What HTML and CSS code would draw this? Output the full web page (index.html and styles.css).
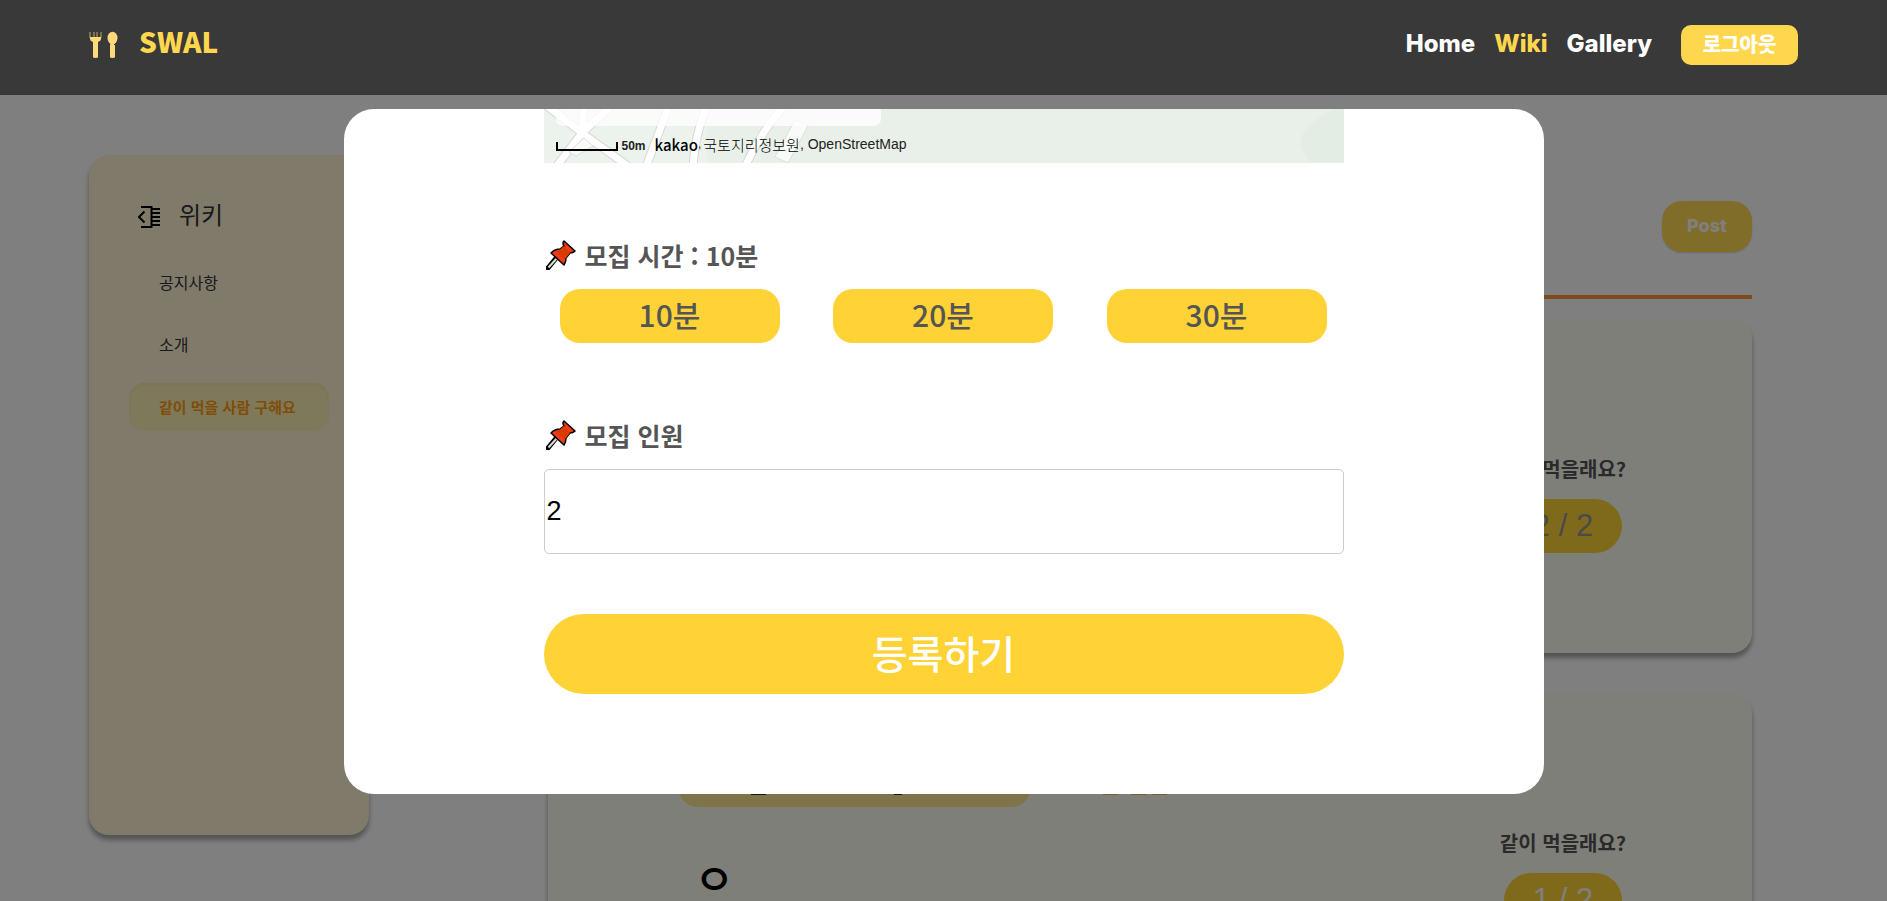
FILE: index.html
```html
<!DOCTYPE html>
<html lang="ko">
<head>
<meta charset="utf-8">
<title>SWAL</title>
<link rel="stylesheet" href="styles.css">
</head>
<body>
<header class="header">
  <a class="brand" href="#">
    <svg class="brand-icon" viewBox="0 0 30 28" aria-hidden="true">
      <path d="M1 1v6M5 1v6M8 1v6M12 1v6" stroke="#ffd97a" stroke-width="1" opacity=".7"/>
      <path d="M1 6h11v2q0 2-3 3v15q0 1-2.500 1t-2.500-1v-15q-3-1-3-3z" fill="#ffd97a"/>
      <ellipse cx="23.500" cy="7" rx="5" ry="6.300" fill="#ffd97a"/>
      <path d="M22 12h3v2h1v12q0 1-2.500 1t-2.500-1v-12z" fill="#ffd97a"/>
    </svg>
    <span>SWAL</span>
  </a>
  <nav class="nav">
    <a href="#">Home</a>
    <a class="current" href="#">Wiki</a>
    <a href="#">Gallery</a>
    <button class="logout" type="button">로그아웃</button>
  </nav>
</header>

<div class="page">
  <aside class="sidebar">
    <h2 class="sidebar-title">
      <svg class="sidebar-icon" viewBox="0 0 22 22" fill="none" stroke="#000" stroke-width="2" aria-hidden="true">
        <path d="M3 1h10.500v20H3M6.500 5.500l-5.500 5.500 5.500 5.500"/>
        <path d="M14 3h8M14 7h8M14 11h8M14 15h8M14 19h8"/>
      </svg>
      <span>위키</span>
    </h2>
    <a class="side-link" href="#">공지사항</a>
    <a class="side-link" href="#">소개</a>
    <a class="side-link active" href="#">같이 먹을 사람 구해요</a>
  </aside>

  <main class="main">
    <div class="toolbar"><button class="post" type="button">Post</button></div>
    <hr class="rule">
    <article class="card">
      <div class="card-body"><div class="tag"></div></div>
      <div class="join">
        <p class="join-title">같이 먹을래요?</p>
        <button class="count full" type="button">2 / 2</button>
      </div>
    </article>
    <article class="card">
      <div class="card-body">
        <div class="tag">
          <svg class="tag-marks" viewBox="0 0 500 2" aria-hidden="true">
            <path d="M73 .5h15M216 .5h8" stroke="#222c3c"/>
            <path d="M425 .5h15M453 .5h15M474 .5h15" stroke="#eca32c" opacity=".7"/>
          </svg>
        </div>
        <p class="memo">ㅇ</p>
      </div>
      <div class="join">
        <p class="join-title">같이 먹을래요?</p>
        <button class="count" type="button">1 / 2</button>
      </div>
    </article>
  </main>
</div>

<div class="overlay">
  <form class="modal" role="dialog">
    <div class="map">
      <svg class="map-art" viewBox="0 0 800 54" preserveAspectRatio="xMinYMin slice" aria-hidden="true">
        <rect width="800" height="54" fill="#e9f0e9"/>
        <path d="M0 0h163v54H0z" fill="#ebf3ec"/>
        <path d="M790 0Q736 28 769 54h31V0z" fill="#e3ede4"/>
        <g fill="none" stroke="#d6d9d6" stroke-width="9">
          <path d="M2-4L38 24 88 60M40-4L38 24M68-4L38 24 12 58M126-6L102 58M164-6Q151 24 149 58M242-6Q216 24 201 58"/>
        </g>
        <g fill="none" stroke="#fff" stroke-width="7">
          <path d="M2-4L38 24 88 60M40-4L38 24M68-4L38 24 12 58M126-6L102 58M164-6Q151 24 149 58M242-6Q216 24 201 58"/>
        </g>
        <path d="M251 11l13 6-20 37-13-6zM40 29l9 8-17 10-7-4z" fill="#f9fbf9" stroke="#dcdfdc"/>
        <path d="M12 0h325v9q0 8-8 8H20q-8 0-8-8z" fill="#fff" opacity=".75"/>
        <path d="M13 33v8h60v-8" fill="none" stroke="#000" stroke-width="2"/>
      </svg>
      <div class="map-credit">
        <span class="map-scale">50m</span>
        <span class="map-brand">kakao</span><span>,</span>
        <span class="map-source">국토지리정보원</span><span class="map-osm">, OpenStreetMap</span>
      </div>
    </div>

    <h3 class="label">
      <svg class="pin" viewBox="0 0 30 30" aria-hidden="true">
        <path d="M11 17L2 28" stroke="#000" stroke-width="5" stroke-linecap="round"/>
        <path d="M12 17L2.500 27.500" stroke="#ddd" stroke-width="2"/>
        <path d="M18 1L29 11Q27 13 24 13L20 18Q20 22 18 25L5 13Q9 9 14 9L18 6Q16 3 18 1z" fill="#f23a14" stroke="#000" stroke-width="1.500" stroke-linejoin="round"/>
        <path d="M14 9.500L18 6l6 7-4 5-2 1-8-7z" fill="#d93a00"/>
      </svg>
      <span>모집 시간 : 10분</span>
    </h3>
    <div class="times">
      <button class="time" type="button">10분</button>
      <button class="time" type="button">20분</button>
      <button class="time" type="button">30분</button>
    </div>

    <label class="label" for="people">
      <svg class="pin" viewBox="0 0 30 30" aria-hidden="true">
        <path d="M11 17L2 28" stroke="#000" stroke-width="5" stroke-linecap="round"/>
        <path d="M12 17L2.500 27.500" stroke="#ddd" stroke-width="2"/>
        <path d="M18 1L29 11Q27 13 24 13L20 18Q20 22 18 25L5 13Q9 9 14 9L18 6Q16 3 18 1z" fill="#f23a14" stroke="#000" stroke-width="1.500" stroke-linejoin="round"/>
        <path d="M14 9.500L18 6l6 7-4 5-2 1-8-7z" fill="#d93a00"/>
      </svg>
      <span>모집 인원</span>
    </label>
    <input class="people" id="people" type="text" inputmode="numeric" value="2">
    <button class="submit" type="button">등록하기</button>
  </form>
</div>
</body>
</html>
```
FILE: styles.css
```css
* { box-sizing: border-box; }

body {
  margin: 0;
  height: 100vh;
  overflow: hidden;
  background: #fff;
  color: #333;
  font-family: "Noto Sans CJK KR", sans-serif;
}

a { color: inherit; text-decoration: none; }
button { border: 0; padding: 0; font-family: inherit; cursor: pointer; }
h2, h3, p { margin: 0; }

.header {
  position: relative;
  z-index: 2;
  display: flex;
  align-items: flex-start;
  justify-content: space-between;
  height: 95px;
  padding: 25px 89px 0;
  background: #393939;
}

.brand {
  display: flex;
  align-items: flex-start;
  gap: 20px;
  color: #ffd74f;
  font-size: 28px;
  font-weight: 900;
  line-height: 32px;
}
.brand-icon { width: 30px; height: 28px; margin-top: 6px; }

.nav {
  display: flex;
  align-items: center;
  gap: 19px;
  height: 40px;
  color: #fff;
  font-family: Inter, "Noto Sans CJK KR", sans-serif;
  font-size: 24px;
  font-weight: 800;
  line-height: 28px;
}
.nav a { padding-bottom: 3px; }
.nav .current { color: #ffd74f; }
.logout {
  width: 117px;
  height: 40px;
  margin-left: 10px;
  padding-bottom: 4px;
  border-radius: 10px;
  background: #ffd74f;
  color: #fff;
  font-size: 20px;
  font-weight: 900;
}

.page {
  display: flex;
  align-items: flex-start;
  height: calc(100vh - 95px);
  overflow: hidden;
  padding: 0 135px 0 89px;
}

.sidebar {
  flex: none;
  width: 280px;
  height: 680px;
  margin-top: 60px;
  padding: 40px;
  border-radius: 20px;
  background: #fff4d5;
  box-shadow: 0 5px 5px rgba(0, 0, 0, .35);
}
.sidebar-title {
  display: flex;
  align-items: center;
  gap: 19px;
  height: 40px;
  margin-bottom: 24px;
  padding-left: 9px;
  font-size: 24px;
  font-weight: 400;
}
.sidebar-title span { padding-bottom: 3px; }
.sidebar-icon { width: 22px; height: 22px; margin-top: 4px; }
.side-link {
  display: flex;
  align-items: center;
  height: 48px;
  margin-bottom: 14px;
  padding: 0 0 2px 30px;
  border-radius: 15px;
  font-size: 16px;
}
.side-link.active {
  background: #fff2b8;
  box-shadow: inset 0 2px 4px rgba(0, 0, 0, .05);
  color: #ff9c0c;
  font-size: 15px;
  font-weight: 700;
}

.main { flex: 1; margin-left: 179px; }
.toolbar { display: flex; justify-content: flex-end; padding-top: 106px; }
.post {
  width: 90px;
  height: 51px;
  padding-bottom: 3px;
  border-radius: 20px;
  background: #ffda52;
  box-shadow: 0 1px 2px rgba(0, 0, 0, .15);
  color: #fff;
  font-family: Inter, sans-serif;
  font-size: 18px;
  font-weight: 800;
}
.rule { height: 4px; margin: 43px 0 20px; border: 0; background: #fa9638; }

.card {
  display: flex;
  justify-content: space-between;
  height: 334px;
  margin-bottom: 40px;
  padding: 0 130px;
  border-radius: 20px;
  background: #fdfff0;
  box-shadow: 0 5px 5px rgba(0, 0, 0, .35);
}
.tag {
  display: flex;
  align-items: flex-end;
  width: 353px;
  height: 60px;
  margin-top: 54px;
  padding-bottom: 11px;
  border-radius: 20px;
  background: #ffe794;
}
.tag-marks { flex: none; width: 500px; height: 2px; }
.memo {
  margin: 40px 0 0 16px;
  color: #000;
  font-size: 44px;
  font-weight: 500;
  line-height: 60px;
}
.join {
  display: flex;
  flex-direction: column;
  align-items: center;
  width: 118px;
  padding-top: 135px;
}
.join-title {
  margin-bottom: 15px;
  color: #555;
  font-size: 20px;
  font-weight: 700;
  line-height: 30px;
  white-space: nowrap;
}
.count {
  width: 118px;
  height: 54px;
  border-radius: 27px;
  background: #ffd436;
  color: #fff;
  font-family: "Liberation Sans", sans-serif;
  font-size: 31px;
}
.count.full { color: #949494; }

.overlay {
  position: fixed;
  inset: 95px 0 0;
  z-index: 1;
  display: flex;
  align-items: flex-start;
  justify-content: center;
  padding-top: 14px;
  background: rgba(0, 0, 0, .5);
}
.modal {
  display: flex;
  flex-direction: column;
  width: 1200px;
  max-width: 90%;
  padding: 0 200px 100px;
  border-radius: 30px;
  background: #fff;
}

.map { position: relative; height: 54px; overflow: hidden; }
.map-art { display: block; width: 100%; height: 100%; }
.map-credit {
  position: absolute;
  left: 78px;
  bottom: 9px;
  display: flex;
  align-items: center;
  height: 20px;
  color: #222;
  font-family: "Liberation Sans", "Noto Sans CJK KR", sans-serif;
  font-size: 12px;
}
.map-scale { margin-right: 9px; padding-top: 3px; font-weight: 700; }
.map-brand { color: #000; font-family: "Noto Sans CJK KR", sans-serif; font-size: 15px; font-weight: 500; }
.map-source { margin-left: 2px; color: #000; font-size: 15px; font-weight: 300; }
.map-osm { font-size: 14px; }

.label {
  display: flex;
  align-items: center;
  gap: 9px;
  height: 40px;
  margin: 72px 0 14px;
  padding-left: 2px;
  color: #555;
  font-size: 25px;
  font-weight: 700;
  line-height: 38px;
}
.label span { padding-bottom: 1px; }
.pin { width: 30px; height: 30px; }

.times { display: flex; justify-content: space-between; padding: 0 17px 0 16px; }
.time {
  width: 220px;
  height: 54px;
  padding-bottom: 4px;
  border-radius: 20px;
  background: #ffd236;
  color: #555;
  font-size: 30px;
  font-weight: 500;
}

.people {
  height: 85px;
  padding: 0 2px;
  border: 1px solid #ccc;
  border-radius: 5px;
  background: #fff;
  color: #000;
  font-family: "Liberation Sans", sans-serif;
  font-size: 27px;
}
.submit {
  height: 80px;
  margin-top: 60px;
  padding-bottom: 5px;
  border-radius: 40px;
  background: #ffd236;
  color: #fff;
  font-size: 39px;
  font-weight: 500;
}
```
